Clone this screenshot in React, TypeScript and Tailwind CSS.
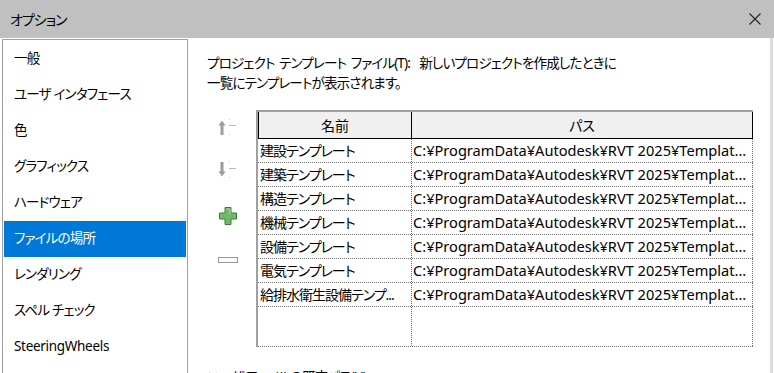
import React from 'react';

// ── Data ───────────────────────────────────────────────────────────────────────

const NAV_ITEMS = [
  '一般',
  'ユーザ インタフェース',
  '色',
  'グラフィックス',
  'ハードウェア',
  'ファイルの場所',
  'レンダリング',
  'スペル チェック',
  'SteeringWheels',
];

const SELECTED = 'ファイルの場所';

const PATH = 'C:¥ProgramData¥Autodesk¥RVT 2025¥Templat...';

const TEMPLATES = [
  '建設テンプレート',
  '建築テンプレート',
  '構造テンプレート',
  '機械テンプレート',
  '設備テンプレート',
  '電気テンプレート',
  '給排水衛生設備テンプ...',
];

const FONT =
  "font-['Noto_Sans','Noto_Sans_CJK_JP',sans-serif] [font-feature-settings:'palt']";

// ── Icons ──────────────────────────────────────────────────────────────────────

function MoveIcon({ down }: { down?: boolean }) {
  return (
    <svg width="22" height="18" viewBox="0 0 22 18">
      {down ? (
        <path d="M3.5 1 h3 v9.5 h2 l-3.5 5 l-3.5 -5 h2 z" fill="#9c9c9c" />
      ) : (
        <path d="M3.5 17 h3 v-9.5 h2 l-3.5 -5 l-3.5 5 h2 z" fill="#9c9c9c" />
      )}
      <rect x="12" y="1" width="1" height="1" fill="#c8c8c8" />
      <rect x="12" y="7" width="7" height="1" fill="#b8b8b8" />
      <rect x="12" y="16" width="1" height="1" fill="#c8c8c8" />
    </svg>
  );
}

function PlusIcon() {
  return (
    <svg width="20" height="20" viewBox="0 0 20 20">
      <path
        d="M7 1.5 h6 v5.5 h5.5 v6 h-5.5 v5.5 h-6 v-5.5 h-5.5 v-6 h5.5 z"
        fill="#72b86a"
        stroke="#3f7a3a"
        strokeWidth="1"
        strokeLinejoin="round"
      />
      <path d="M8 3 h4 v5" stroke="#a6d89c" strokeWidth="1" fill="none" />
    </svg>
  );
}

function MinusIcon() {
  return (
    <svg width="20" height="6" viewBox="0 0 20 6">
      <rect x="0.5" y="0.5" width="19" height="5" fill="#fafafa" stroke="#9a9a9a" />
    </svg>
  );
}

// ── Main component ─────────────────────────────────────────────────────────────

export default function App() {
  return (
    <div className={`w-[774px] h-[373px] overflow-hidden bg-white text-black ${FONT}`}>
      {/* Title bar */}
      <div className="h-[38px] bg-[#c0c0c0] flex items-center justify-between pl-[10px] pr-[12px]">
        <span className="text-[14px] tracking-[-1px]">オプション</span>
        <svg width="12" height="12" viewBox="0 0 12 12" className="mr-[1px]">
          <path d="M0.5 0.5 L11.5 11.5 M11.5 0.5 L0.5 11.5" stroke="#222" strokeWidth="1.1" />
        </svg>
      </div>

      <div className="flex h-[335px]">
        {/* Left nav */}
        <div className="ml-[2px] mt-[1px] w-[186px] h-[400px] border border-[#a0a0a0] px-[1px] pt-[1px] shrink-0">
          {NAV_ITEMS.map((item) => (
            <div
              key={item}
              className={`h-[36px] flex items-center pl-[10px] pb-[2px] text-[13.5px] ${
                item === 'SteeringWheels' ? 'tracking-[-0.3px]' : 'tracking-[-0.8px]'
              } ${item === SELECTED ? 'bg-[#0078d7] text-white' : ''}`}
            >
              {item}
            </div>
          ))}
        </div>

        {/* Right pane */}
        <div className="flex-1 pl-[19px] pt-[15px]">
          <p className="text-[13.6px] leading-[20px] tracking-[-0.9px] [word-spacing:2px]">
            プロジェクト テンプレート ファイル(T):&nbsp; 新しいプロジェクトを作成したときに
            <br />
            一覧にテンプレートが表示されます。
          </p>

          <div className="flex mt-[17px]">
            {/* Move / add / remove buttons */}
            <div className="w-[49px] flex flex-col items-center pt-[8px] pr-[8px]">
              <MoveIcon />
              <div className="mt-[25px]">
                <MoveIcon down />
              </div>
              <div className="mt-[27px]">
                <PlusIcon />
              </div>
              <div className="mt-[31px]">
                <MinusIcon />
              </div>
            </div>

            {/* Template table */}
            <div className="w-[497px] h-[237px] border-t-2 border-l-2 border-[#a0a0a0] text-[14px]">
              <div className="flex h-[27px] bg-[#f0f0f0] border-b border-black border-l border-l-black">
                <div className="w-[153px] border-r border-black flex items-center justify-center">名前</div>
                <div className="flex-1 border-r border-black flex items-center justify-center">パス</div>
              </div>
              {TEMPLATES.map((name) => (
                <div key={name} className="flex h-[24px] border-b border-dotted border-[#6f6f6f]">
                  <div className="w-[154px] border-r border-dotted border-[#6f6f6f] pl-[2px] flex items-center whitespace-nowrap overflow-hidden tracking-[-1px]">
                    {name}
                  </div>
                  <div className="flex-1 border-r border-dotted border-[#6f6f6f] pl-[1px] flex items-center whitespace-nowrap overflow-hidden text-[14.6px]">
                    {PATH}
                  </div>
                </div>
              ))}
              <div className="flex h-[40px] border-b border-dotted border-[#6f6f6f]">
                <div className="w-[154px] border-r border-dotted border-[#6f6f6f]" />
                <div className="flex-1 border-r border-dotted border-[#6f6f6f]" />
              </div>
            </div>
          </div>

          <p className="mt-[20px] text-[13.6px] leading-[20px] tracking-[-0.9px]">ユーザ ファイルの既定パス(U):</p>
        </div>

        {/* Right edge */}
        <div className="w-[4px] shrink-0 flex">
          <div className="w-[3px] bg-[#dcdcdc]" />
          <div className="w-[1px] bg-white" />
        </div>
      </div>
    </div>
  );
}
